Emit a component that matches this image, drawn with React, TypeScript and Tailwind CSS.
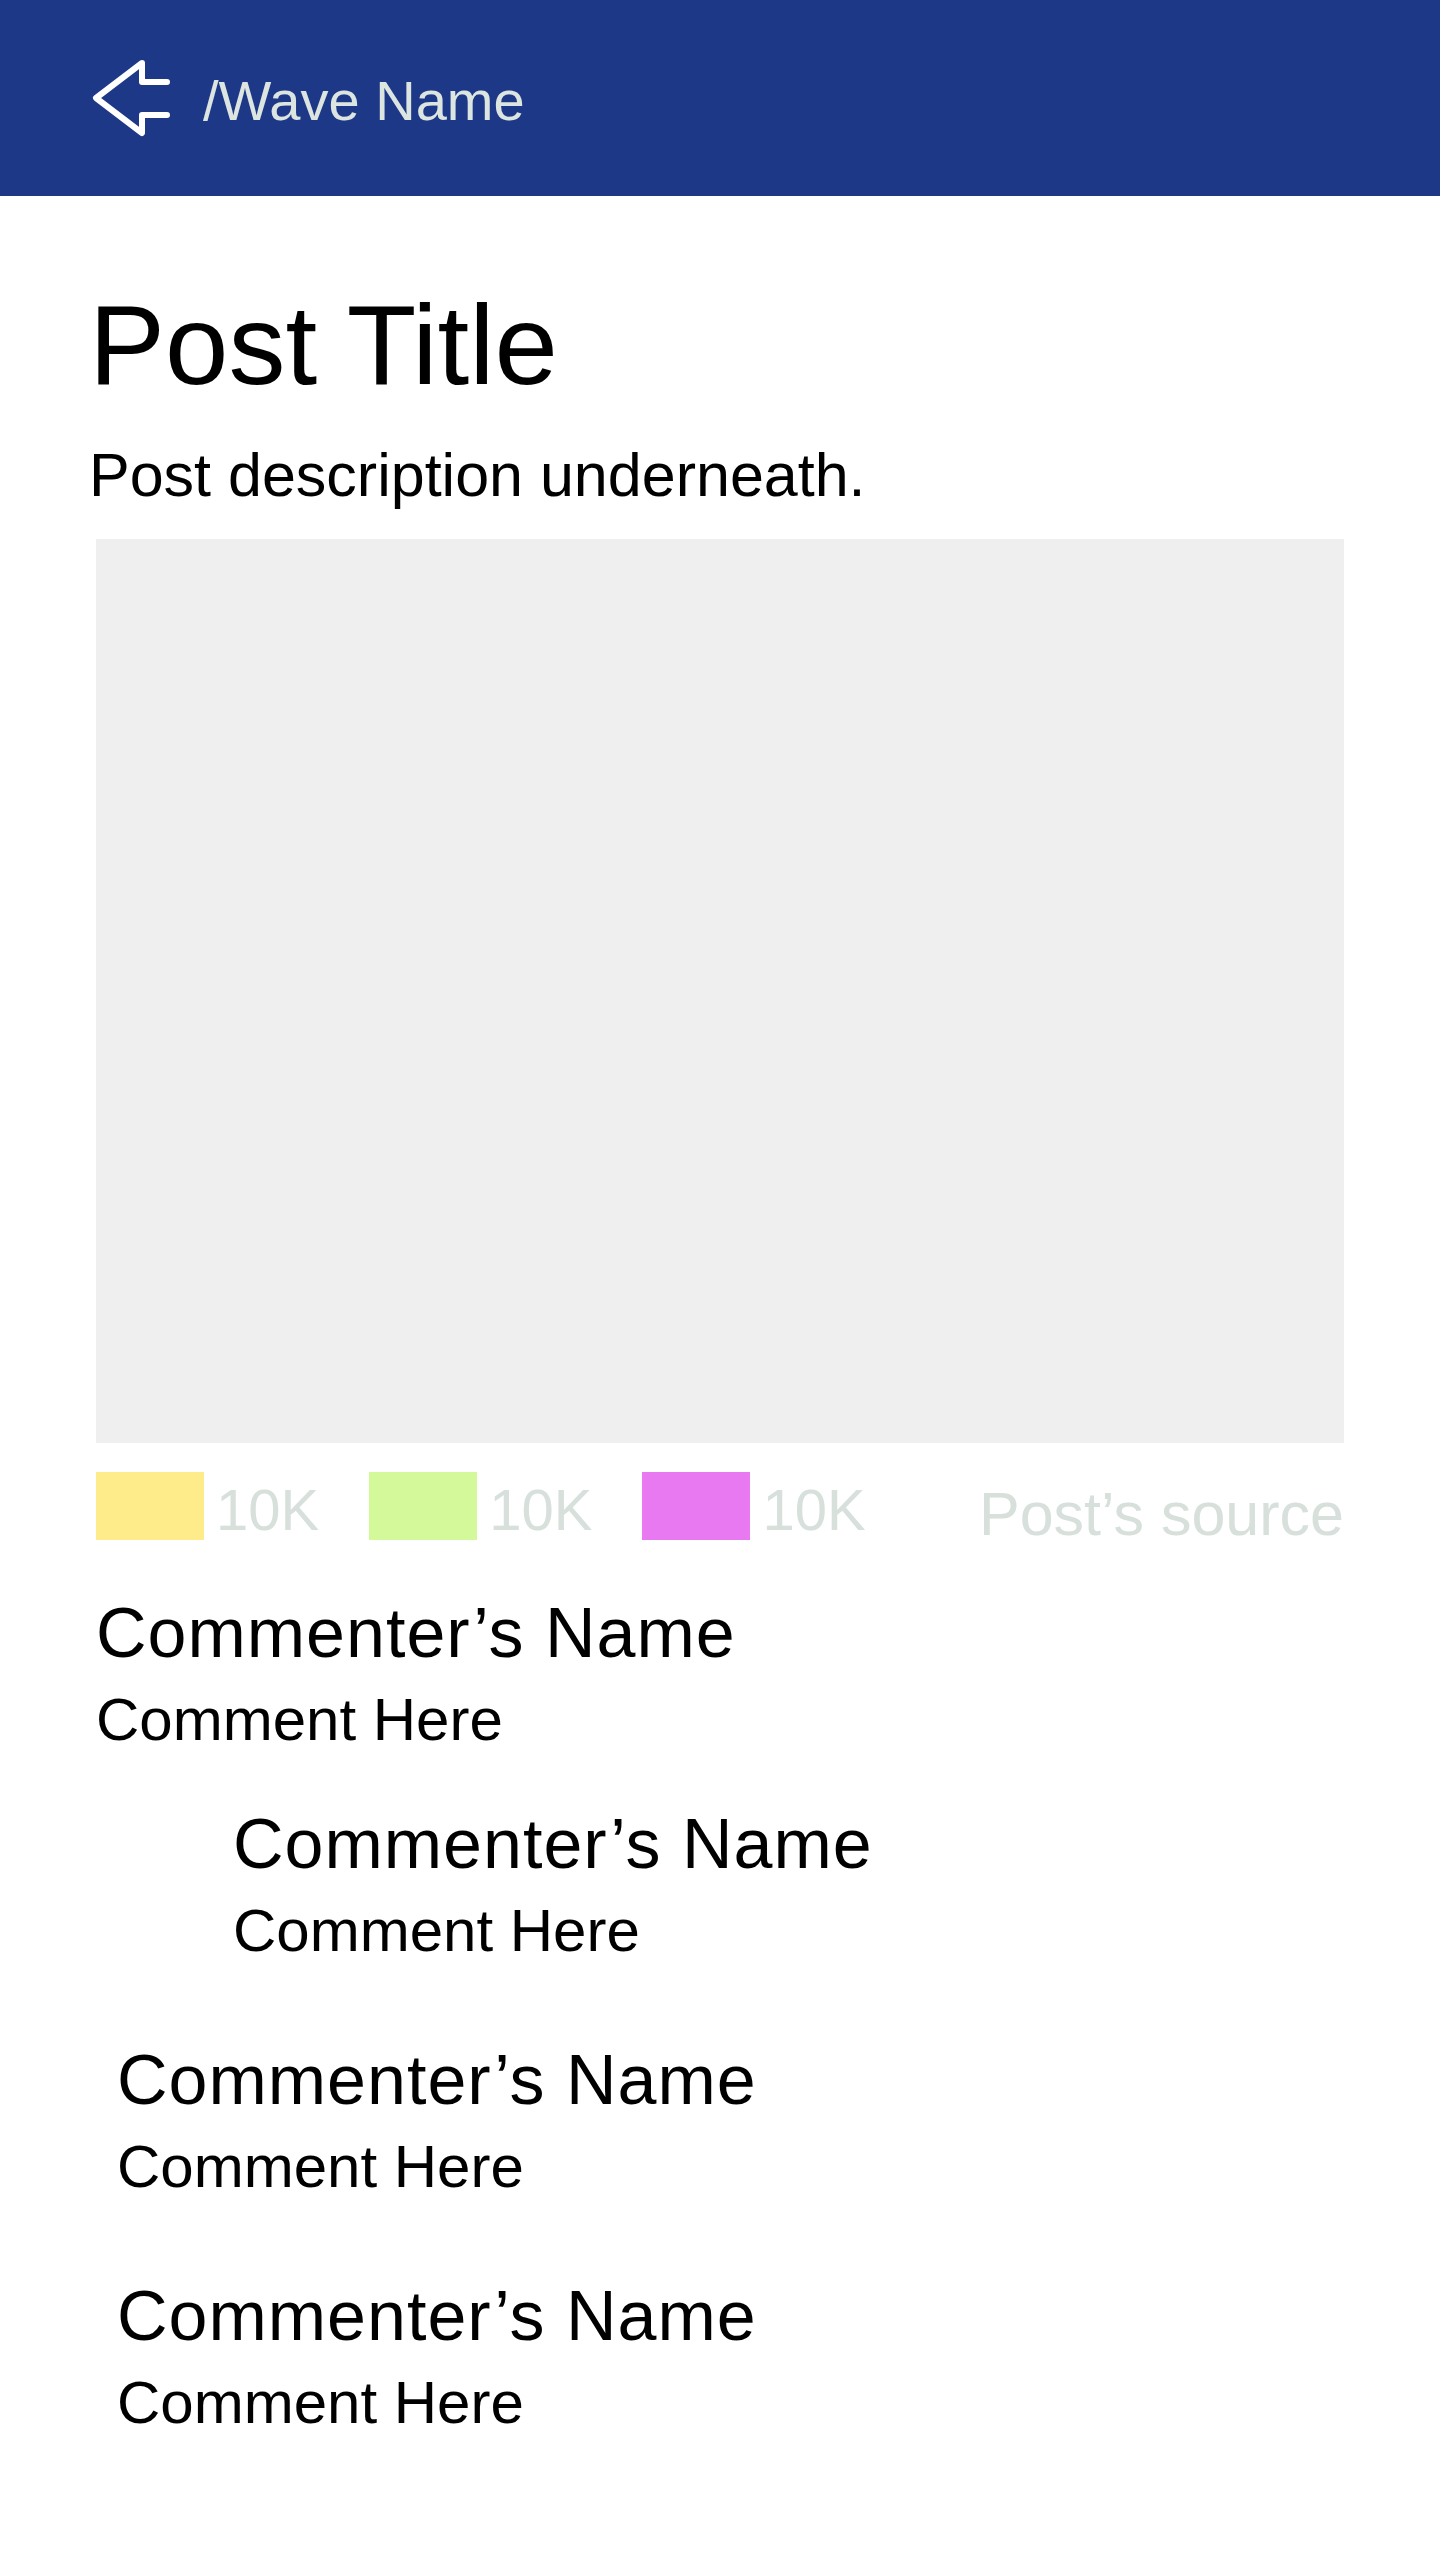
import React from "react";

const font = { fontFamily: '"Liberation Sans", Arial, Helvetica, sans-serif' };

function BackArrow() {
  return (
    <svg width="84" height="84" viewBox="0 0 84 84" fill="none" className="shrink-0">
      <path
        d="M79 26 H54 V7 L8 42 L54 77 V59 H79"
        stroke="#ffffff"
        strokeWidth="6"
        strokeLinecap="round"
        strokeLinejoin="round"
      />
    </svg>
  );
}

function Comment({ className }: { className: string }) {
  return (
    <div className={className}>
      <div className="text-[70px] leading-[68px] tracking-[1px] text-black whitespace-nowrap">Commenter’s Name</div>
      <div className="mt-[23px] text-[60px] leading-[59px] text-black whitespace-nowrap">Comment Here</div>
    </div>
  );
}

function Stat({ color }: { color: string }) {
  return (
    <div className="flex items-end gap-[12px]">
      <div className={`w-[108px] h-[68px] ${color}`} />
      <span className="text-[58px] leading-[58px] text-[#d7e0db] mb-[1px]">10K</span>
    </div>
  );
}

export default function App() {
  return (
    <div className="w-[1440px] min-h-[2560px] bg-white" style={font}>
      <header className="h-[196px] bg-[#1e3888] flex items-center pl-[88px] gap-[31px]">
        <BackArrow />
        <span className="text-[56px] leading-none text-[#dce5e0] mt-[6px]">/Wave Name</span>
      </header>

      <main className="pl-[82px] pr-[96px]">
        <h1 className="mt-[93px] pl-[7px] text-[114px] leading-[112px] font-normal text-black">Post Title</h1>
        <p className="mt-[44px] pl-[7px] text-[61px] leading-[60px] text-black">Post description underneath.</p>

        <div className="mt-[34px] ml-[14px] w-[1248px] h-[904px] bg-[#efefef]" />

        <div className="mt-[29px] ml-[14px] w-[1248px] flex items-end">
          <Stat color="bg-[#feec8a]" />
          <div className="w-[50px]" />
          <Stat color="bg-[#d4f99a]" />
          <div className="w-[50px]" />
          <Stat color="bg-[#e879f0]" />
          <span className="ml-auto text-[61px] leading-[60px] text-[#d7e0db] -mb-[4px]">Post’s source</span>
        </div>

        <Comment className="mt-[59px] ml-[14px]" />
        <Comment className="mt-[61px] ml-[151px]" />
        <Comment className="mt-[86px] ml-[35px]" />
        <Comment className="mt-[86px] ml-[35px]" />
      </main>
    </div>
  );
}
